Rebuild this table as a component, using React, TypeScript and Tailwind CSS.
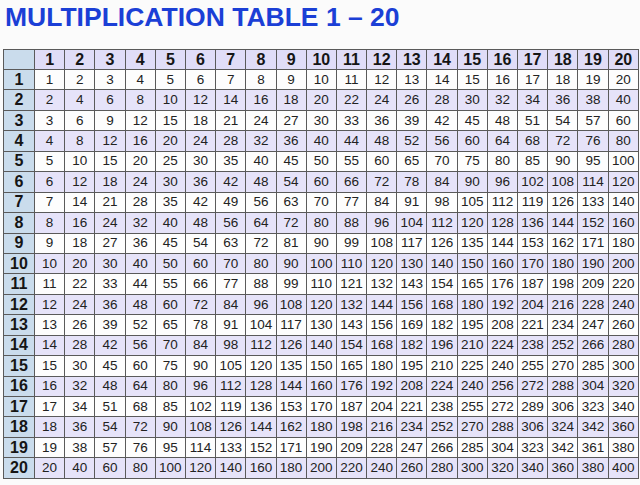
const nums = Array.from({ length: 20 }, (_, i) => i + 1);

export default function App() {
  return (
    <div
      className="w-[640px] h-[485px] bg-[#fbfbfb] overflow-hidden"
      style={{ fontFamily: '"Liberation Sans", Arial, sans-serif' }}
    >
      <h1 className="pl-[5px] pt-[4px] text-[26.5px] leading-[26px] font-bold text-[#1b3fd6] whitespace-nowrap">
        MULTIPLICATION TABLE 1 – 20
      </h1>
      <table className="mt-[19px] ml-[3px] w-[636px] h-[430px] table-fixed border-collapse leading-[16px]">
        <colgroup>
          <col className="w-[31px]" />
          {nums.map((n) => (
            <col key={n} />
          ))}
        </colgroup>
        <thead>
          <tr className="bg-[#e0ddf7] h-[20px]">
            <th className="border border-[#5a5a5a] bg-[#cadcec] p-0"></th>
            {nums.map((n) => (
              <th
                key={n}
                className="border border-[#5a5a5a] text-[16px] font-bold text-[#151515] text-center p-0"
              >
                {n}
              </th>
            ))}
          </tr>
        </thead>
        <tbody>
          {nums.map((r) => (
            <tr key={r} className={r % 2 === 0 ? "h-[20px] bg-[#e6e3f9]" : "h-[20px] bg-[#fdfdfd]"}>
              <th className="border border-[#5a5a5a] bg-[#cadcec] text-[16px] font-bold text-[#151515] text-center p-0">
                {r}
              </th>
              {nums.map((c) => (
                <td
                  key={c}
                  className="border border-[#5a5a5a] text-[13.5px] text-[#222] text-center p-0"
                >
                  {r * c}
                </td>
              ))}
            </tr>
          ))}
        </tbody>
      </table>
    </div>
  );
}
